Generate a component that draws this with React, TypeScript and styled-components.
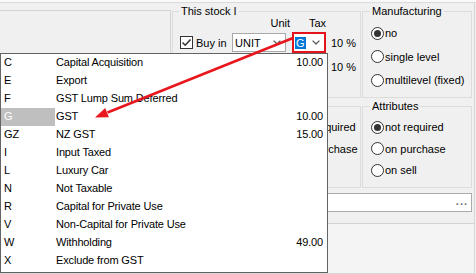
import React from "react";
import styled, { createGlobalStyle, css } from "styled-components";

const GlobalStyle = createGlobalStyle`
  html, body { margin: 0; padding: 0; background: #f0f0f0; }
  body { font-family: "Liberation Sans", Arial, sans-serif; font-size: 11px; color: #000; }
  * { box-sizing: border-box; }
`;

const Window = styled.div`
  position: relative;
  width: 476px;
  height: 274px;
  overflow: hidden;
  background: #f0f0f0;
  display: flex;
  flex-direction: column;
`;

const TopStrip = styled.div`
  flex: none;
  height: 3px;
  background: #f9f9f9;
  border-bottom: 1px solid #dadada;
`;

const Main = styled.div`
  flex: none;
  width: 475px;
  height: 271px;
  border-right: 1px solid #d6d6d6;
  border-bottom: 1px solid #d6d6d6;
  display: flex;
  flex-direction: column;
`;

const Upper = styled.div`
  flex: none;
  height: 220px;
  display: flex;
`;

const LeftPanel = styled.div`
  flex: none;
  width: 171px;
  height: 205px;
  margin-top: 7px;
  border-top: 1px solid #d4d4d4;
  border-right: 1px solid #d4d4d4;
`;

const RightColumn = styled.div`
  flex: none;
  width: 300px;
  margin-left: 1px;
  padding-top: 2px;
  display: flex;
  flex-direction: column;
`;

const GroupRow = styled.div<{ $cols: string; $mt?: number }>`
  display: grid;
  grid-template-columns: ${(p) => p.$cols};
  column-gap: 1px;
  margin-top: ${(p) => p.$mt ?? 0}px;
`;

const Group = styled.fieldset<{ $h: number; $pt?: number; $pl?: number }>`
  margin: 0;
  min-width: 0;
  height: ${(p) => p.$h}px;
  border: 1px solid #dcdcdc;
  padding: ${(p) => p.$pt ?? 0}px 4px 0 ${(p) => p.$pl ?? 8}px;
`;

const Legend = styled.legend`
  padding: 0 2px;
  margin-left: -1px;
  line-height: 13px;
  white-space: nowrap;
`;

const StockRow = styled.div<{ $mt: number; $h: number }>`
  display: grid;
  grid-template-columns: 45px 54px 32px auto;
  column-gap: 7px;
  align-items: center;
  height: ${(p) => p.$h}px;
  margin-top: ${(p) => p.$mt}px;
`;

const HeadLabel = styled.span<{ $shift: number }>`
  text-align: right;
  margin-right: ${(p) => -p.$shift}px;
  line-height: 13px;
`;

const CheckLabel = styled.label`
  display: flex;
  align-items: center;
  gap: 3px;
  white-space: nowrap;
`;

const CheckBox = styled.span`
  flex: none;
  width: 13px;
  height: 13px;
  border: 1px solid #333;
  background: #fff;
  display: inline-flex;
  align-items: center;
  justify-content: center;
`;

const Combo = styled.div<{ $marked?: boolean }>`
  height: 19px;
  border: 1px solid #a9a9a9;
  background: #fff;
  display: flex;
  align-items: center;
  justify-content: space-between;
  padding: 0 4px 0 1px;
  ${(p) =>
    p.$marked &&
    css`
      outline: 2px solid #e3141b;
      outline-offset: -1px;
    `}
`;

const ComboText = styled.span<{ $selected?: boolean }>`
  line-height: 12px;
  padding: 0 1px;
  ${(p) =>
    p.$selected &&
    css`
      background: #0078d7;
      color: #fff;
    `}
`;

const Percent = styled.span`
  white-space: nowrap;
  margin-left: -1px;
`;

const RadioList = styled.div<{ $gap: number }>`
  display: flex;
  flex-direction: column;
  gap: ${(p) => p.$gap}px;
`;

const RadioRow = styled.label`
  display: flex;
  align-items: center;
  gap: 1px;
  height: 20px;
  white-space: nowrap;
`;

const RadioCircle = styled.span<{ $checked?: boolean }>`
  flex: none;
  width: 13px;
  height: 13px;
  border-radius: 50%;
  border: 1px solid #333;
  background: #fff;
  display: inline-flex;
  align-items: center;
  justify-content: center;
  &::after {
    content: "";
    width: 7px;
    height: 7px;
    border-radius: 50%;
    background: ${(p) => (p.$checked ? "#333" : "transparent")};
  }
`;

const TextField = styled.div`
  height: 19px;
  margin-top: 5px;
  border: 1px solid #ababab;
  background: #fff;
  display: flex;
  align-items: center;
  justify-content: flex-end;
  padding-right: 3px;
`;

const EllipsisButton = styled.span`
  color: #6d6d6d;
  font-weight: bold;
  letter-spacing: 1px;
  line-height: 12px;
  margin-top: -3px;
`;

const BottomPanel = styled.div`
  flex: 1;
  border-top: 1px solid #d3d3d3;
  background: #f4f4f4;
`;

const Popup = styled.div`
  position: absolute;
  left: 0;
  top: 53px;
  width: 328px;
  height: 220px;
  background: #fff;
  border: 1px solid #646464;
`;

const PopupRow = styled.div`
  display: grid;
  grid-template-columns: 54px 1fr auto;
  height: 18px;
  line-height: 17px;
  white-space: nowrap;
  letter-spacing: -0.15px;
`;

const CodeCell = styled.span<{ $selected?: boolean }>`
  padding-left: 3px;
  background: ${(p) => (p.$selected ? "#bfbfbf" : "transparent")};
  color: ${(p) => (p.$selected ? "#fff" : "#000")};
`;

const DescCell = styled.span`
  padding-left: 1px;
`;

const AmountCell = styled.span`
  padding-right: 4px;
  text-align: right;
`;

const Overlay = styled.svg`
  position: absolute;
  left: 0;
  top: 0;
  pointer-events: none;
`;

const Chevron = () => (
  <svg width="8" height="5" viewBox="0 0 8 5">
    <polyline points="0.6,0.6 4,4 7.4,0.6" fill="none" stroke="#5a5a5a" strokeWidth="1.3" />
  </svg>
);

const Check = () => (
  <svg width="11" height="11" viewBox="0 0 11 11">
    <polyline points="1.5,5.5 4.2,8.2 9.5,2.5" fill="none" stroke="#333" strokeWidth="1.6" />
  </svg>
);

const taxCodes: { code: string; desc: string; rate?: string }[] = [
  { code: "C", desc: "Capital Acquisition", rate: "10.00" },
  { code: "E", desc: "Export" },
  { code: "F", desc: "GST Lump Sum Deferred" },
  { code: "G", desc: "GST", rate: "10.00" },
  { code: "GZ", desc: "NZ GST", rate: "15.00" },
  { code: "I", desc: "Input Taxed" },
  { code: "L", desc: "Luxury Car" },
  { code: "N", desc: "Not Taxable" },
  { code: "R", desc: "Capital for Private Use" },
  { code: "V", desc: "Non-Capital for Private Use" },
  { code: "W", desc: "Withholding", rate: "49.00" },
  { code: "X", desc: "Exclude from GST" },
];

const Radio = ({ label, checked }: { label: string; checked?: boolean }) => (
  <RadioRow>
    <RadioCircle $checked={checked} />
    {label}
  </RadioRow>
);

export default function App() {
  return (
    <>
      <GlobalStyle />
      <Window>
        <TopStrip />
        <Main>
          <Upper>
            <LeftPanel />
            <RightColumn>
              <GroupRow $cols="189px 110px">
                <Group $h={93} $pl={7}>
                  <Legend>This stock I</Legend>
                  <StockRow $mt={-1} $h={13}>
                    <span />
                    <HeadLabel $shift={4}>Unit</HeadLabel>
                    <HeadLabel $shift={1}>Tax</HeadLabel>
                    <span />
                  </StockRow>
                  <StockRow $mt={3} $h={19}>
                    <CheckLabel>
                      <CheckBox>
                        <Check />
                      </CheckBox>
                      Buy in
                    </CheckLabel>
                    <Combo>
                      <ComboText>UNIT</ComboText>
                      <Chevron />
                    </Combo>
                    <Combo $marked>
                      <ComboText $selected>G</ComboText>
                      <Chevron />
                    </Combo>
                    <Percent>10 %</Percent>
                  </StockRow>
                  <StockRow $mt={5} $h={19}>
                    <CheckLabel>
                      <CheckBox>
                        <Check />
                      </CheckBox>
                      Sell in
                    </CheckLabel>
                    <Combo>
                      <ComboText>UNIT</ComboText>
                      <Chevron />
                    </Combo>
                    <Combo>
                      <ComboText />
                      <Chevron />
                    </Combo>
                    <Percent>10 %</Percent>
                  </StockRow>
                </Group>
                <Group $h={93} $pt={5}>
                  <Legend>Manufacturing</Legend>
                  <RadioList $gap={3.5}>
                    <Radio label="no" checked />
                    <Radio label="single level" />
                    <Radio label="multilevel (fixed)" />
                  </RadioList>
                </Group>
              </GroupRow>
              <GroupRow $cols="101px 87px 110px" $mt={2}>
                <Group $h={88} $pt={4}>
                  <Legend>Serial numbers</Legend>
                </Group>
                <Group $h={88} $pt={4}>
                  <Legend>Batch</Legend>
                  <RadioList $gap={1.5}>
                    <Radio label="not required" checked />
                    <Radio label="on purchase" />
                  </RadioList>
                </Group>
                <Group $h={88} $pt={4}>
                  <Legend>Attributes</Legend>
                  <RadioList $gap={1.5}>
                    <Radio label="not required" checked />
                    <Radio label="on purchase" />
                    <Radio label="on sell" />
                  </RadioList>
                </Group>
              </GroupRow>
              <TextField>
                <EllipsisButton>...</EllipsisButton>
              </TextField>
            </RightColumn>
          </Upper>
          <BottomPanel />
        </Main>
        <Popup>
          {taxCodes.map((t) => (
            <PopupRow key={t.code}>
              <CodeCell $selected={t.code === "G"}>{t.code}</CodeCell>
              <DescCell>{t.desc}</DescCell>
              <AmountCell>{t.rate ?? ""}</AmountCell>
            </PopupRow>
          ))}
        </Popup>
        <Overlay width="476" height="274" viewBox="0 0 476 274">
          <line x1="293" y1="38" x2="107.5" y2="112.5" stroke="#e8171d" strokeWidth="2.5" />
          <polygon points="95,117.5 108.9,117.3 105.2,108" fill="#e8171d" />
        </Overlay>
      </Window>
    </>
  );
}
